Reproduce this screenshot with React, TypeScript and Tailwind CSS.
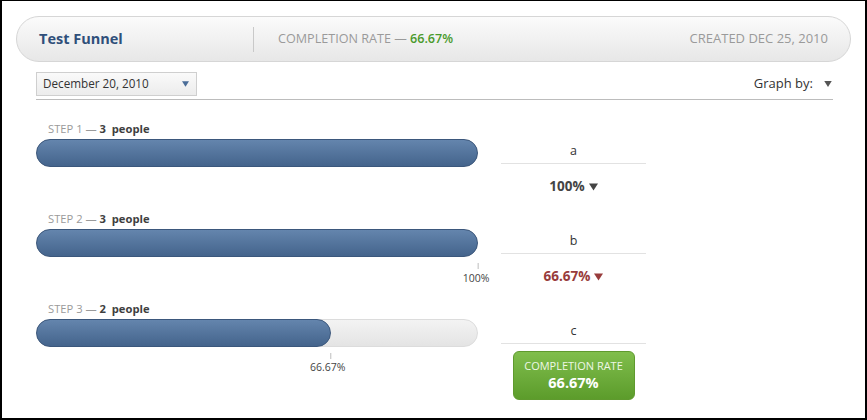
import React from "react";

type Step = {
  n: number;
  people: number;
  pct: number;
  letter: string;
  tick?: string;
};

const steps: Step[] = [
  { n: 1, people: 3, pct: 100, letter: "a" },
  { n: 2, people: 3, pct: 100, letter: "b", tick: "100%" },
  { n: 3, people: 2, pct: 66.67, letter: "c", tick: "66.67%" },
];

const Arrow = ({ className }: { className?: string }) => (
  <svg viewBox="0 0 10 8" className={className} fill="currentColor">
    <path d="M0 0h10L5 8z" />
  </svg>
);

const FunnelRow = ({ step, last }: { step: Step; last: boolean }) => {
  return (
    <div className="flex h-[90px]">
      {/* bar column */}
      <div className="w-[442px]">
        <div className="h-[17px] pl-3 text-[11.2px] leading-[14px]">
          <span className="text-[#9a9a9a]">STEP {step.n} — </span>
          <span className="font-bold text-[#3f3f3f]">{step.people}&nbsp; people</span>
        </div>
        <div className="relative h-[28px] rounded-full border border-[#dcdcdc] bg-gradient-to-b from-[#f3f3f3] to-[#e4e4e4]">
          <div
            className="absolute -top-px -left-px -bottom-px rounded-full border border-[#3b577c] bg-gradient-to-b from-[#6485ad] to-[#44648c]"
            style={{ width: `calc(${step.pct}% + 2px)` }}
          />
        </div>
        {step.tick && (
          <div className="relative h-[30px]">
            <div
              className="absolute top-[6px] flex -translate-x-1/2 flex-col items-center"
              style={{ left: `${step.pct}%` }}
            >
              <div className="h-[6px] w-px bg-[#bdbdbd]" />
              <div
                className={
                  step.pct === 100
                    ? "mt-[2px] translate-x-[-2px] text-[10.5px] leading-[14px] text-[#444]"
                    : "mt-[1px] translate-x-[-3px] text-[10.5px] leading-[14px] text-[#444]"
                }
              >
                {step.tick}
              </div>
            </div>
          </div>
        )}
      </div>
      {/* result column */}
      <div className="ml-[23px] w-[145px] pt-[17px]">
        <div className="flex h-[25px] items-center justify-center border-b border-[#e2e2e2] text-[12.5px] text-[#333]">
          {step.letter}
        </div>
        {last ? (
          <div className="mx-auto mt-[7px] flex h-[49px] w-[122px] flex-col items-center justify-center rounded-[6px] border border-[#5f9a2e] bg-gradient-to-b from-[#80be4c] to-[#5c9c2b] text-white">
            <div className="text-[11px] leading-[15px] text-[#eef7e6]">COMPLETION RATE</div>
            <div className="text-[14.5px] font-bold leading-[20px]">66.67%</div>
          </div>
        ) : (
          <div
            className={
              "mt-[14px] flex items-center justify-center gap-[4px] text-[13.5px] font-bold leading-[16px] " +
              (step.n === 1 ? "text-[#444]" : "text-[#983c3c]")
            }
          >
            {step.n === 1 ? "100%" : "66.67%"}
            <Arrow className="mt-[2px] h-[8px] w-[9px]" />
          </div>
        )}
      </div>
    </div>
  );
};

export default function App() {
  return (
    <div
      className="h-[420px] w-[867px] border-t border-r-2 border-b-2 border-l-2 border-black bg-white"
      style={{ fontFamily: "'Open Sans', 'DejaVu Sans', sans-serif" }}
    >
      {/* header pill */}
      <div className="mx-[14px] mt-[15px] flex h-[46px] items-center rounded-full border border-[#d6d6d6] bg-gradient-to-b from-[#fbfbfb] to-[#e7e7e7]">
        <div className="w-[236px] pl-[22px] text-[14.5px] font-bold text-[#2f4f7a]">Test Funnel</div>
        <div className="h-[25px] w-px bg-[#c9c9c9]" />
        <div className="pl-[24px] text-[12.6px] text-[#9a9a9a]">
          COMPLETION RATE — <span className="font-semibold text-[#4a9a2c]">66.67%</span>
        </div>
        <div className="ml-auto pr-[22px] text-[13px] text-[#9a9a9a]">CREATED DEC 25, 2010</div>
      </div>

      {/* toolbar */}
      <div className="ml-[34px] mr-[32px] mt-[10px] flex items-center justify-between border-b border-[#bcbcbc] pb-[3px]">
        <div className="flex h-[24px] w-[161px] items-center justify-between border border-[#cfcfcf] bg-gradient-to-b from-[#fafafa] to-[#ececec] pl-[6px] pr-[7px] text-[11.7px] text-[#333]">
          December 20, 2010
          <Arrow className="h-[6px] w-[7px] text-[#4a6d98]" />
        </div>
        <div className="flex items-center gap-[10px] text-[13px] text-[#333]">
          Graph by:
          <Arrow className="h-[6px] w-[10px] text-[#555]" />
        </div>
      </div>

      {/* funnel */}
      <div className="ml-[34px] mt-[22px]">
        {steps.map((s, i) => (
          <FunnelRow key={s.n} step={s} last={i === steps.length - 1} />
        ))}
      </div>
    </div>
  );
}
